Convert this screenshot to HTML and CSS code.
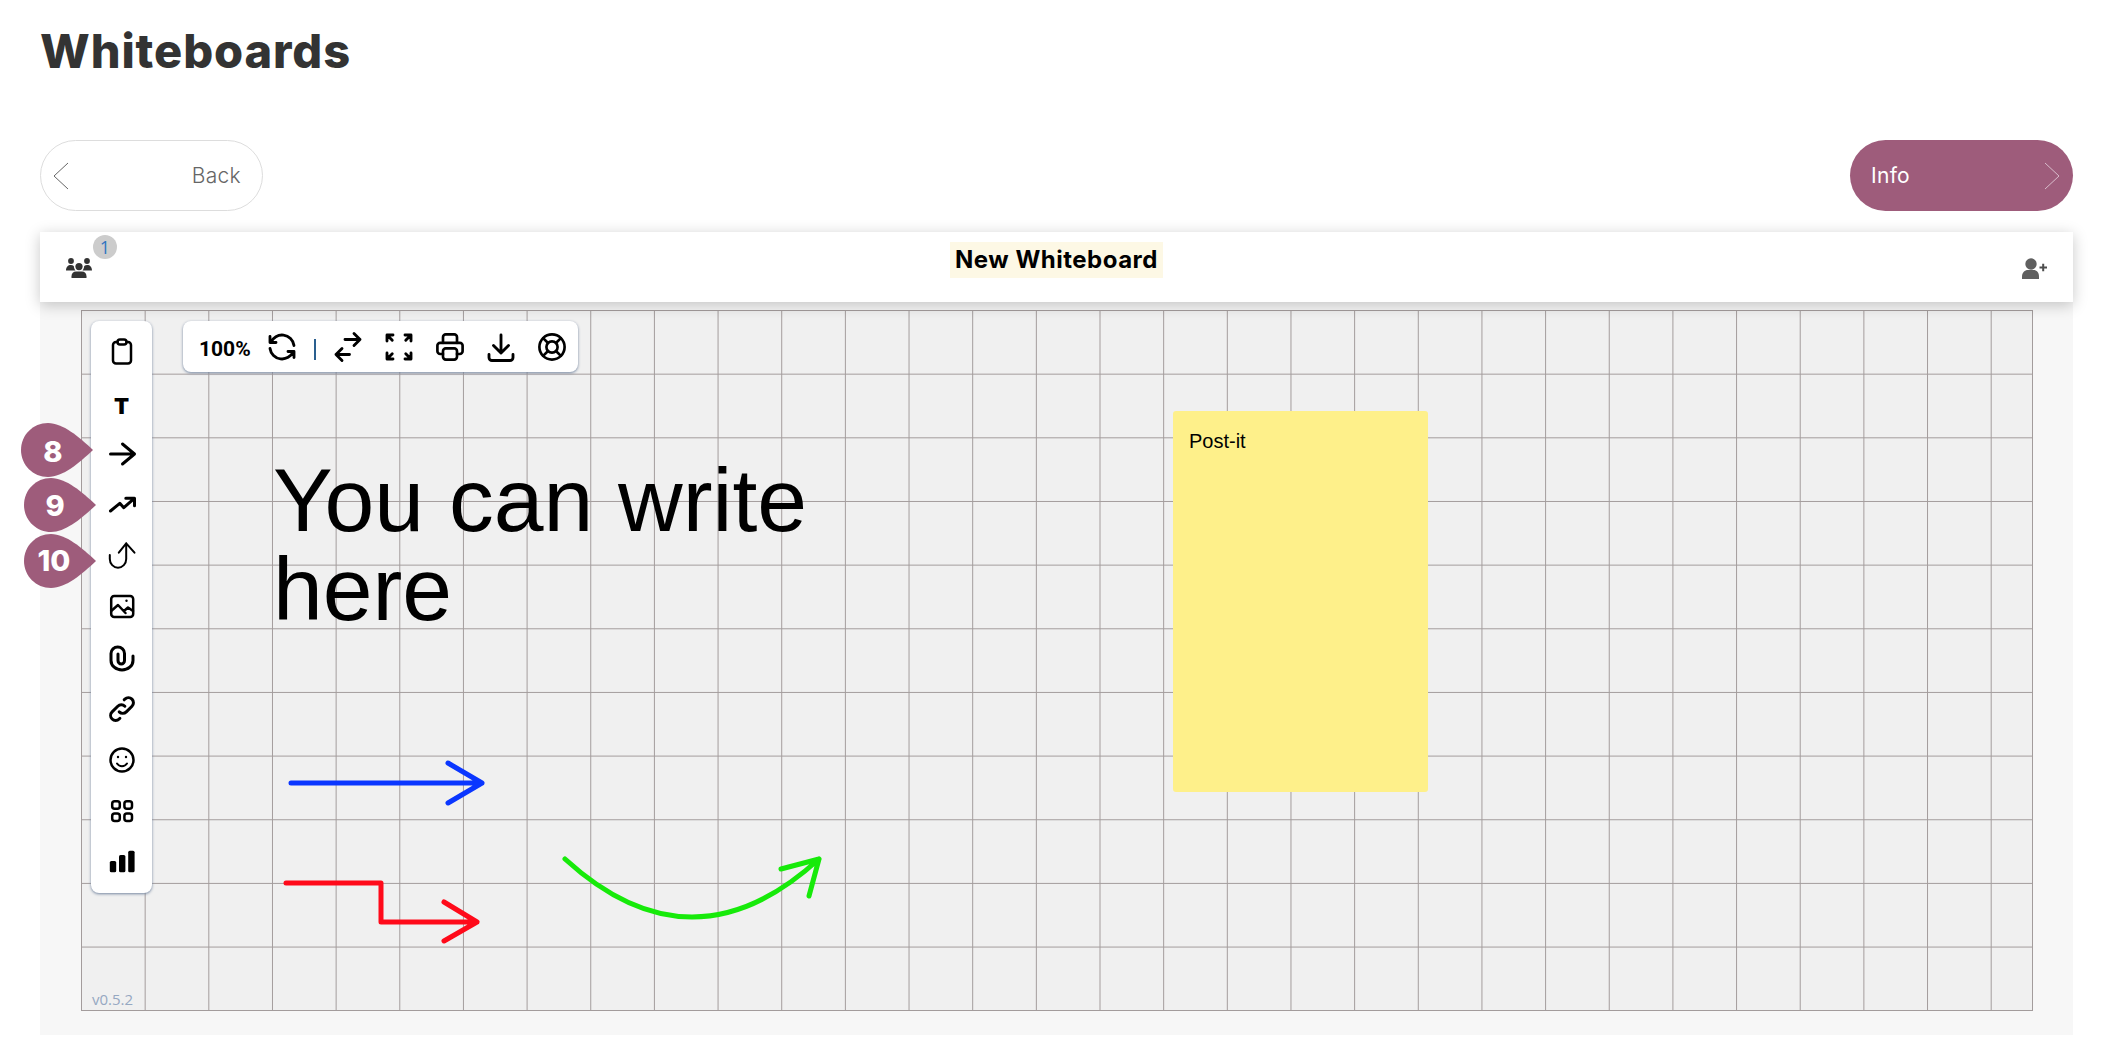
FILE: index.html
```html
<!DOCTYPE html>
<html lang="en">
<head>
    <meta charset="UTF-8">
    <title>Whiteboards</title>
    <link rel="stylesheet" href="styles.css">
</head>
<body>
    <div id="page">
        <h1 class="page-title">Whiteboards</h1>
        <div class="nav-row">
            <a class="nav-btn back-btn">
                <svg class="chevron" viewBox="0 0 16 28"><path d="M15 1L1 14L15 27"/></svg>
                <span>Back</span>
            </a>
            <a class="nav-btn info-btn">
                <span>Info</span>
                <svg class="chevron" viewBox="0 0 16 28"><path d="M1 1L15 14L1 27"/></svg>
            </a>
        </div>
        <div class="wb-header">
            <div class="wb-users">
                <svg class="users-icon" viewBox="0 0 26 20">
                    <circle cx="5" cy="3" r="2.9"/>
                    <circle cx="21" cy="3" r="2.9"/>
                    <circle cx="13" cy="8.6" r="3.6"/>
                    <path d="M0 12.6C0 9 2 7 4.9 7C6 7 7 7.3 7.8 8C7.9 9.800 8.400 11 9.500 12.600Z"/>
                    <path d="M26 12.600C26 9 24 7 21.100 7C20 7 19 7.300 18.200 8C18.100 9.800 17.600 11 16.500 12.600Z"/>
                    <path d="M5.500 20V18.200C5.500 15.500 7.500 13.600 10 13.600H16C18.500 13.600 20.500 15.500 20.500 18.200V20Z"/>
                </svg>
                <span class="user-count">1</span>
            </div>
            <div class="wb-title">New Whiteboard</div>
            <svg class="add-user" viewBox="0 0 26 22">
                <circle cx="10" cy="7" r="5.700"/>
                <path d="M1 22V19.500C1 15.500 3.800 13 7 13H12.500C15.700 13 18 15.500 18 19.500V22Z"/>
                <path class="plus" d="M18.500 10.500H26M22.200 6.700V14.300"/>
            </svg>
        </div>
        <div class="wb-body">
            <div class="wb-grid">
                <svg class="drawing" viewBox="0 0 1952 701">
                    <g class="line-blue">
                        <path d="M210 473H401M367 453L401 473L367 493"/>
                    </g>
                    <g class="line-red">
                        <path d="M205 573H300V612H396M363 592L396 612L363 631"/>
                    </g>
                    <g class="line-green">
                        <path d="M484 549Q611 665 738 549M700 559L738 549L728 586"/>
                    </g>
                </svg>
                <div class="big-text">You can write here</div>
                <div class="postit">Post-it</div>
                <div class="version">v0.5.2</div>

                <div class="side-tools">
                    <div class="tool">
                        <svg class="icon" viewBox="0 0 32 32"><path d="M11.500 6H10a3 3 0 0 0-3 3v15.500a3 3 0 0 0 3 3h12a3 3 0 0 0 3-3V9a3 3 0 0 0-3-3h-1.500"/><rect x="11.500" y="3.500" width="9" height="5" rx="2.500"/></svg>
                    </div>
                    <div class="tool"><span class="tool-t">T</span></div>
                    <div class="tool">
                        <svg class="icon bold" viewBox="0 0 32 32"><path d="M4.500 16H28.500M16.500 6L28.500 16L16.500 26"/></svg>
                    </div>
                    <div class="tool">
                        <svg class="icon bold" viewBox="0 0 32 32"><path d="M4.500 22L13.800 14.300L17.800 18.700L27.800 9.800M19.800 9.300H28.500V16.700"/></svg>
                    </div>
                    <div class="tool">
                        <svg class="icon thin" viewBox="0 0 32 32"><path d="M20.200 3.300V19A8.200 8.700 0 0 1 3.800 19V15M12.800 12.700L20.200 3.300L28.500 12.700"/></svg>
                    </div>
                    <div class="tool">
                        <svg class="icon" viewBox="0 0 32 32"><rect x="5.200" y="5" width="22" height="21" rx="3"/><path d="M5.200 20L12 14L19.500 22M18 20L22 16.500L27 20"/><circle class="dot" cx="20.500" cy="9.800" r="1.200"/></svg>
                    </div>
                    <div class="tool">
                        <svg class="icon bold" viewBox="0 0 32 32"><path d="M27 14V18.500A11 9.500 0 0 1 5 18.500V11.500A6.750 6.500 0 0 1 18.500 11.500V18.500A3.250 3.500 0 0 1 12 18.500V12"/></svg>
                    </div>
                    <div class="tool">
                        <svg class="icon" viewBox="0 0 32 32"><g transform="translate(-1 -1) scale(1.42)"><path class="sw-link" d="M10 14a3.500 3.500 0 0 0 5 0l4 -4a3.500 3.500 0 0 0 -5 -5l-.5 .5"/><path class="sw-link" d="M14 10a3.500 3.500 0 0 0 -5 0l-4 4a3.500 3.500 0 0 0 5 5l.5 -.5"/></g></svg>
                    </div>
                    <div class="tool">
                        <svg class="icon" viewBox="0 0 32 32"><circle cx="16" cy="16" r="11.500"/><circle class="dot" cx="12" cy="13" r="1.200"/><circle class="dot" cx="20" cy="13" r="1.200"/><path class="sw-small" d="M11 19.500a6 6 0 0 0 10 0"/></svg>
                    </div>
                    <div class="tool">
                        <svg class="icon" viewBox="0 0 32 32"><rect x="6.200" y="6.200" width="7.600" height="7.600" rx="2.500"/><rect x="18.400" y="6.200" width="7.600" height="7.600" rx="2.500"/><rect x="6.200" y="18.400" width="7.600" height="7.600" rx="2.500"/><rect x="18.400" y="18.400" width="7.600" height="7.600" rx="2.500"/></svg>
                    </div>
                    <div class="tool">
                        <svg class="icon bars" viewBox="0 0 32 32"><rect x="3.800" y="15" width="6.400" height="11.300" rx="1.600"/><rect x="13" y="9" width="6.400" height="17.300" rx="1.600"/><rect x="22.200" y="4.700" width="6.400" height="21.600" rx="1.600"/></svg>
                    </div>
                </div>

                <div class="top-tools">
                    <span class="zoom-level">100%</span>
                    <svg class="icon" viewBox="0 0 32 32"><g transform="translate(-2 -2) scale(1.5)"><path class="sw" d="M20 11a8.100 8.100 0 0 0 -15.500 -2m-.5 -4v4h4"/><path class="sw" d="M4 13a8.100 8.100 0 0 0 15.500 2m.5 4v-4h-4"/></g></svg>
                    <span class="tools-sep"></span>
                    <svg class="icon" viewBox="0 0 32 32"><g transform="translate(-2 -2) scale(1.500)"><path class="sw" d="M16 3l4 4l-4 4M10 7l10 0M8 13l-4 4l4 4M4 17l9 0"/></g></svg>
                    <svg class="icon spaced" viewBox="0 0 32 32"><g transform="translate(-2 -2) scale(1.500)"><path class="sw" d="M16 4l4 0l0 4M16.500 7.500l3.500 -3.500M8 20l-4 0l0 -4M4 20l3.500 -3.500M16 20l4 0l0 -4M16.500 16.500l3.500 3.500M8 4l-4 0l0 4M4 4l3.500 3.500"/></g></svg>
                    <svg class="icon spaced" viewBox="0 0 32 32"><g transform="translate(-0.800 -0.800) scale(1.400)"><path class="sw" d="M17 17h2a2 2 0 0 0 2 -2v-4a2 2 0 0 0 -2 -2h-14a2 2 0 0 0 -2 2v4a2 2 0 0 0 2 2h2"/><path class="sw" d="M17 9v-4a2 2 0 0 0 -2 -2h-6a2 2 0 0 0 -2 2v4"/><path class="sw" d="M7 15a2 2 0 0 1 2 -2h6a2 2 0 0 1 2 2v4a2 2 0 0 1 -2 2h-6a2 2 0 0 1 -2 -2z"/></g></svg>
                    <svg class="icon spaced" viewBox="0 0 32 32"><g transform="translate(-2 -2) scale(1.500)"><path class="sw" d="M4 17v2a2 2 0 0 0 2 2h12a2 2 0 0 0 2 -2v-2M7 11l5 5l5 -5M12 4l0 12"/></g></svg>
                    <svg class="icon spaced" viewBox="0 0 32 32"><g transform="translate(-0.800 -0.800) scale(1.400)"><circle class="sw" cx="12" cy="12" r="4"/><circle class="sw" cx="12" cy="12" r="9"/><path class="sw" d="M15 15l3.350 3.350M9 15l-3.350 3.350M5.650 5.650l3.350 3.350M18.350 5.650l-3.350 3.350"/></g></svg>
                </div>
            </div>

            <svg class="marker marker-8" viewBox="0 0 72 54"><path d="M0 27C0 12 12 0 27 0C42 0 58 14 72 27C58 40 42 54 27 54C12 54 0 42 0 27Z"/><text x="32" y="39">8</text></svg>
            <svg class="marker marker-9" viewBox="0 0 72 54"><path d="M0 27C0 12 12 0 27 0C42 0 58 14 72 27C58 40 42 54 27 54C12 54 0 42 0 27Z"/><text x="31" y="38">9</text></svg>
            <svg class="marker marker-10" viewBox="0 0 72 54"><path d="M0 27C0 12 12 0 27 0C42 0 58 14 72 27C58 40 42 54 27 54C12 54 0 42 0 27Z"/><text x="30" y="37">10</text></svg>
        </div>
    </div>
</body>
</html>
```

FILE: styles.css
```css
*{
    margin: 0;
    padding: 0;
    box-sizing: border-box;
}
body{
    background: #fff;
    font-family: "Inter", "Open Sans", sans-serif;
}
#page{
    padding: 0 40px;
}
.page-title{
    padding-top: 23px;
    height: 140px;
    font-size: 47px;
    line-height: 56px;
    font-weight: 800;
    letter-spacing: .9px;
    color: #333;
}
.nav-row{
    display: flex;
    justify-content: space-between;
}
.nav-btn{
    width: 223px;
    height: 71px;
    border-radius: 36px;
    display: flex;
    align-items: center;
    justify-content: space-between;
    font-size: 21px;
    letter-spacing: .3px;
}
.chevron{
    width: 16px;
    height: 28px;
    fill: none;
    stroke-width: 1;
}
.back-btn{
    border: 1px solid #ddd;
    padding: 0 21px 0 12px;
    color: #666;
    font-weight: 300;
}
.back-btn .chevron{
    stroke: #666;
}
.info-btn{
    background: #9e5c7b;
    color: #fff;
    padding: 0 13px 0 21px;
}
.info-btn .chevron{
    stroke: #d9bccb;
}

.wb-header{
    position: relative;
    z-index: 2;
    margin-top: 21px;
    height: 70px;
    background: #fff;
    box-shadow: 0 3px 14px rgba(0,0,0,.22);
    padding: 0 26px;
    display: flex;
    align-items: center;
    justify-content: space-between;
}
.wb-users{
    position: relative;
    width: 26px;
    height: 20px;
    margin-top: 2px;
}
.users-icon{
    display: block;
    width: 26px;
    height: 20px;
    fill: #333;
}
.user-count{
    position: absolute;
    left: 27px;
    top: -23px;
    width: 24px;
    height: 24px;
    border-radius: 50%;
    background: #ccc;
    color: #2f75c0;
    font-size: 18px;
    line-height: 24px;
    text-align: center;
    font-family: "Open Sans", sans-serif;
}
.wb-title{
    background: #fdf8e5;
    height: 36px;
    line-height: 36px;
    padding: 0 5px;
    margin-bottom: 14px;
    font-size: 24px;
    font-weight: 700;
    letter-spacing: .5px;
    color: #000;
}
.add-user{
    width: 26px;
    height: 22px;
    fill: #5f5f5f;
    margin-top: 2px;
}
.add-user .plus{
    fill: none;
    stroke: #4d4d4d;
    stroke-width: 2;
}

.wb-body{
    position: relative;
    background: #f7f7f7;
    height: 733px;
    padding: 8px 41px 0;
}
.wb-grid{
    position: relative;
    width: 1952px;
    height: 701px;
    background-color: #f0f0f0;
    background-image:
        linear-gradient(to right, #a39c9c 1px, transparent 1px),
        linear-gradient(to bottom, #a39c9c 1px, transparent 1px);
    background-size: 63.67px 63.67px;
    border-right: 1px solid #a39c9c;
    border-bottom: 1px solid #a39c9c;
}
.drawing{
    position: absolute;
    left: 0;
    top: 0;
    width: 1952px;
    height: 701px;
    fill: none;
    stroke-width: 5;
    stroke-linecap: round;
    stroke-linejoin: round;
}
.line-blue{
    stroke: #0a36ff;
}
.line-red{
    stroke: #ff0a1a;
}
.line-green{
    stroke: #17ea0a;
}
.big-text{
    position: absolute;
    left: 192px;
    top: 146px;
    width: 570px;
    font-family: "Liberation Sans", Arial, sans-serif;
    font-size: 89.500px;
    line-height: 89px;
    color: #000;
}
.postit{
    position: absolute;
    left: 1092px;
    top: 101px;
    width: 255px;
    height: 381px;
    border-radius: 3px;
    background: #fef08a;
    padding: 19px 16px;
    font-family: "Liberation Sans", Arial, sans-serif;
    font-size: 20px;
    color: #000;
}
.version{
    position: absolute;
    left: 11px;
    bottom: 1px;
    font-size: 15px;
    color: #96a8c2;
    font-family: "Open Sans", sans-serif;
}

.side-tools{
    position: absolute;
    left: 10px;
    top: 11px;
    width: 61px;
    height: 572px;
    padding-top: 5px;
    background: #fff;
    border-radius: 8px;
    box-shadow: 0 1px 3px #74859f;
}
.tool{
    height: 51px;
    display: flex;
    align-items: center;
    justify-content: center;
}
.tool-t{
    margin-top: 7px;
    font-size: 22px;
    font-weight: 900;
    color: #000;
}
.icon{
    display: block;
    flex: none;
    width: 32px;
    height: 32px;
    fill: none;
    stroke: #000;
    stroke-width: 2.500;
    stroke-linecap: round;
    stroke-linejoin: round;
}
.icon.bold{
    stroke-width: 3;
}
.icon.thin{
    stroke-width: 2;
}
.icon .sw{
    stroke-width: 1.900;
}
.icon .sw-link{
    stroke-width: 2.100;
}
.icon .sw-small{
    stroke-width: 2;
}
.icon .dot{
    fill: #000;
    stroke: none;
}
.icon.bars{
    fill: #000;
    stroke: none;
}

.top-tools{
    position: absolute;
    left: 102px;
    top: 11px;
    width: 395px;
    height: 51px;
    padding-left: 16px;
    background: #fff;
    border-radius: 8px;
    box-shadow: 0 1px 3px #74859f;
    display: flex;
    align-items: center;
}
.zoom-level{
    width: 67px;
    font-size: 21px;
    font-weight: 700;
    font-family: "Roboto", sans-serif;
    color: #000;
    margin-top: 4px;
}
.tools-sep{
    flex: none;
    width: 2px;
    height: 21px;
    margin: 5px 16px 0 16px;
    background: #2a5f8f;
}
.icon.spaced{
    margin-left: 19px;
}

.marker{
    position: absolute;
    width: 72px;
    height: 54px;
    z-index: 3;
    fill: #9e5c7b;
}
.marker text{
    fill: #fff;
    font-size: 29px;
    font-weight: 800;
    text-anchor: middle;
    font-family: "Inter", sans-serif;
}
.marker-8{
    left: -19px;
    top: 121px;
}
.marker-9{
    left: -16px;
    top: 176px;
}
.marker-10{
    left: -16px;
    top: 232px;
}
```
